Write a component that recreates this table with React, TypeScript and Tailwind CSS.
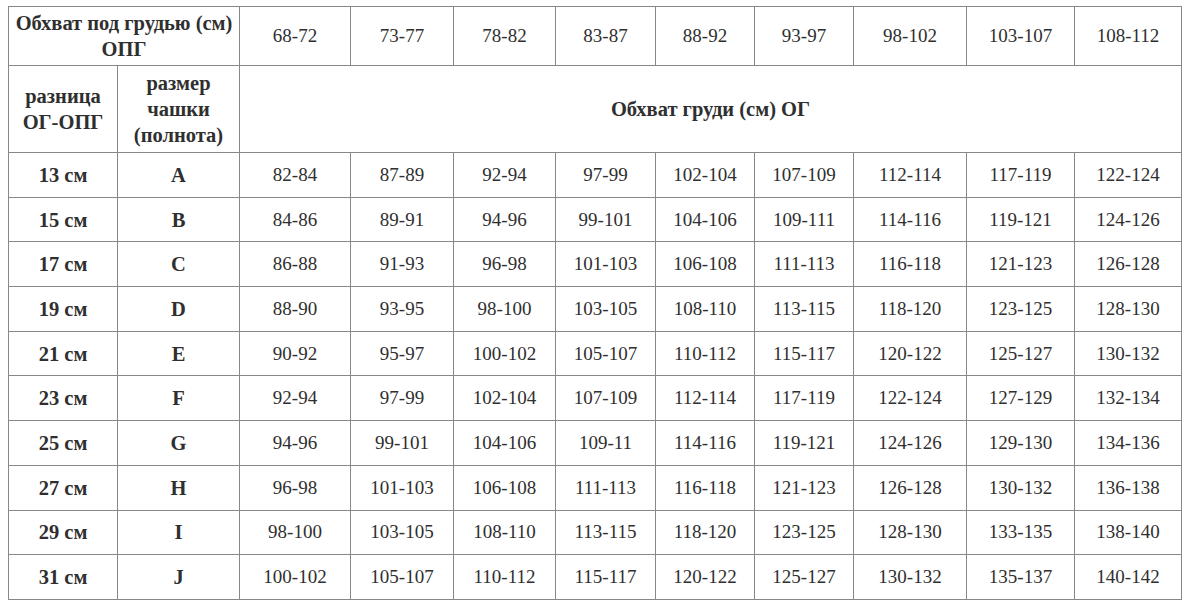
import React from "react";

const heads = ["68-72", "73-77", "78-82", "83-87", "88-92", "93-97", "98-102", "103-107", "108-112"];
const rows: [string, string, string[]][] = [
  ["13 см", "A", ["82-84", "87-89", "92-94", "97-99", "102-104", "107-109", "112-114", "117-119", "122-124"]],
  ["15 см", "B", ["84-86", "89-91", "94-96", "99-101", "104-106", "109-111", "114-116", "119-121", "124-126"]],
  ["17 см", "C", ["86-88", "91-93", "96-98", "101-103", "106-108", "111-113", "116-118", "121-123", "126-128"]],
  ["19 см", "D", ["88-90", "93-95", "98-100", "103-105", "108-110", "113-115", "118-120", "123-125", "128-130"]],
  ["21 см", "E", ["90-92", "95-97", "100-102", "105-107", "110-112", "115-117", "120-122", "125-127", "130-132"]],
  ["23 см", "F", ["92-94", "97-99", "102-104", "107-109", "112-114", "117-119", "122-124", "127-129", "132-134"]],
  ["25 см", "G", ["94-96", "99-101", "104-106", "109-11", "114-116", "119-121", "124-126", "129-130", "134-136"]],
  ["27 см", "H", ["96-98", "101-103", "106-108", "111-113", "116-118", "121-123", "126-128", "130-132", "136-138"]],
  ["29 см", "I", ["98-100", "103-105", "108-110", "113-115", "118-120", "123-125", "128-130", "133-135", "138-140"]],
  ["31 см", "J", ["100-102", "105-107", "110-112", "115-117", "120-122", "125-127", "130-132", "135-137", "140-142"]],
];
const widths = [109, 122, 111, 103, 102, 100, 99, 99, 113, 108, 107];

export default function App() {
  return (
    <div className="bg-white w-[1194px] h-[612px] pt-[6px] pl-[8px] text-[#2f2f2f]" style={{ fontFamily: '"Liberation Serif", serif' }}>
      <table className="table-fixed border-collapse w-[1173px] text-[19px] leading-[26px] text-center">
        <colgroup>
          {widths.map((w, i) => (
            <col key={i} style={{ width: w }} />
          ))}
        </colgroup>
        <tbody>
          <tr className="h-[59px]">
            <td colSpan={2} className="border border-[#888] font-bold text-[20.5px] px-1">Обхват под грудью (см) ОПГ</td>
            {heads.map((h) => (
              <td key={h} className="border border-[#888]">{h}</td>
            ))}
          </tr>
          <tr className="h-[87px]">
            <td className="border border-[#888] font-bold text-[20.5px]">разница<br />ОГ-ОПГ</td>
            <td className="border border-[#888] font-bold text-[20.5px]">размер<br />чашки<br />(полнота)</td>
            <td colSpan={9} className="border border-[#888] font-bold text-[20.5px]">Обхват груди (см) ОГ</td>
          </tr>
          {rows.map(([a, b, vals]) => (
            <tr key={a} className="h-[44.7px]">
              <td className="border border-[#888] font-bold text-[20.5px]">{a}</td>
              <td className="border border-[#888] font-bold text-[20.5px]">{b}</td>
              {vals.map((v, i) => (
                <td key={i} className="border border-[#888]">{v}</td>
              ))}
            </tr>
          ))}
        </tbody>
      </table>
    </div>
  );
}
